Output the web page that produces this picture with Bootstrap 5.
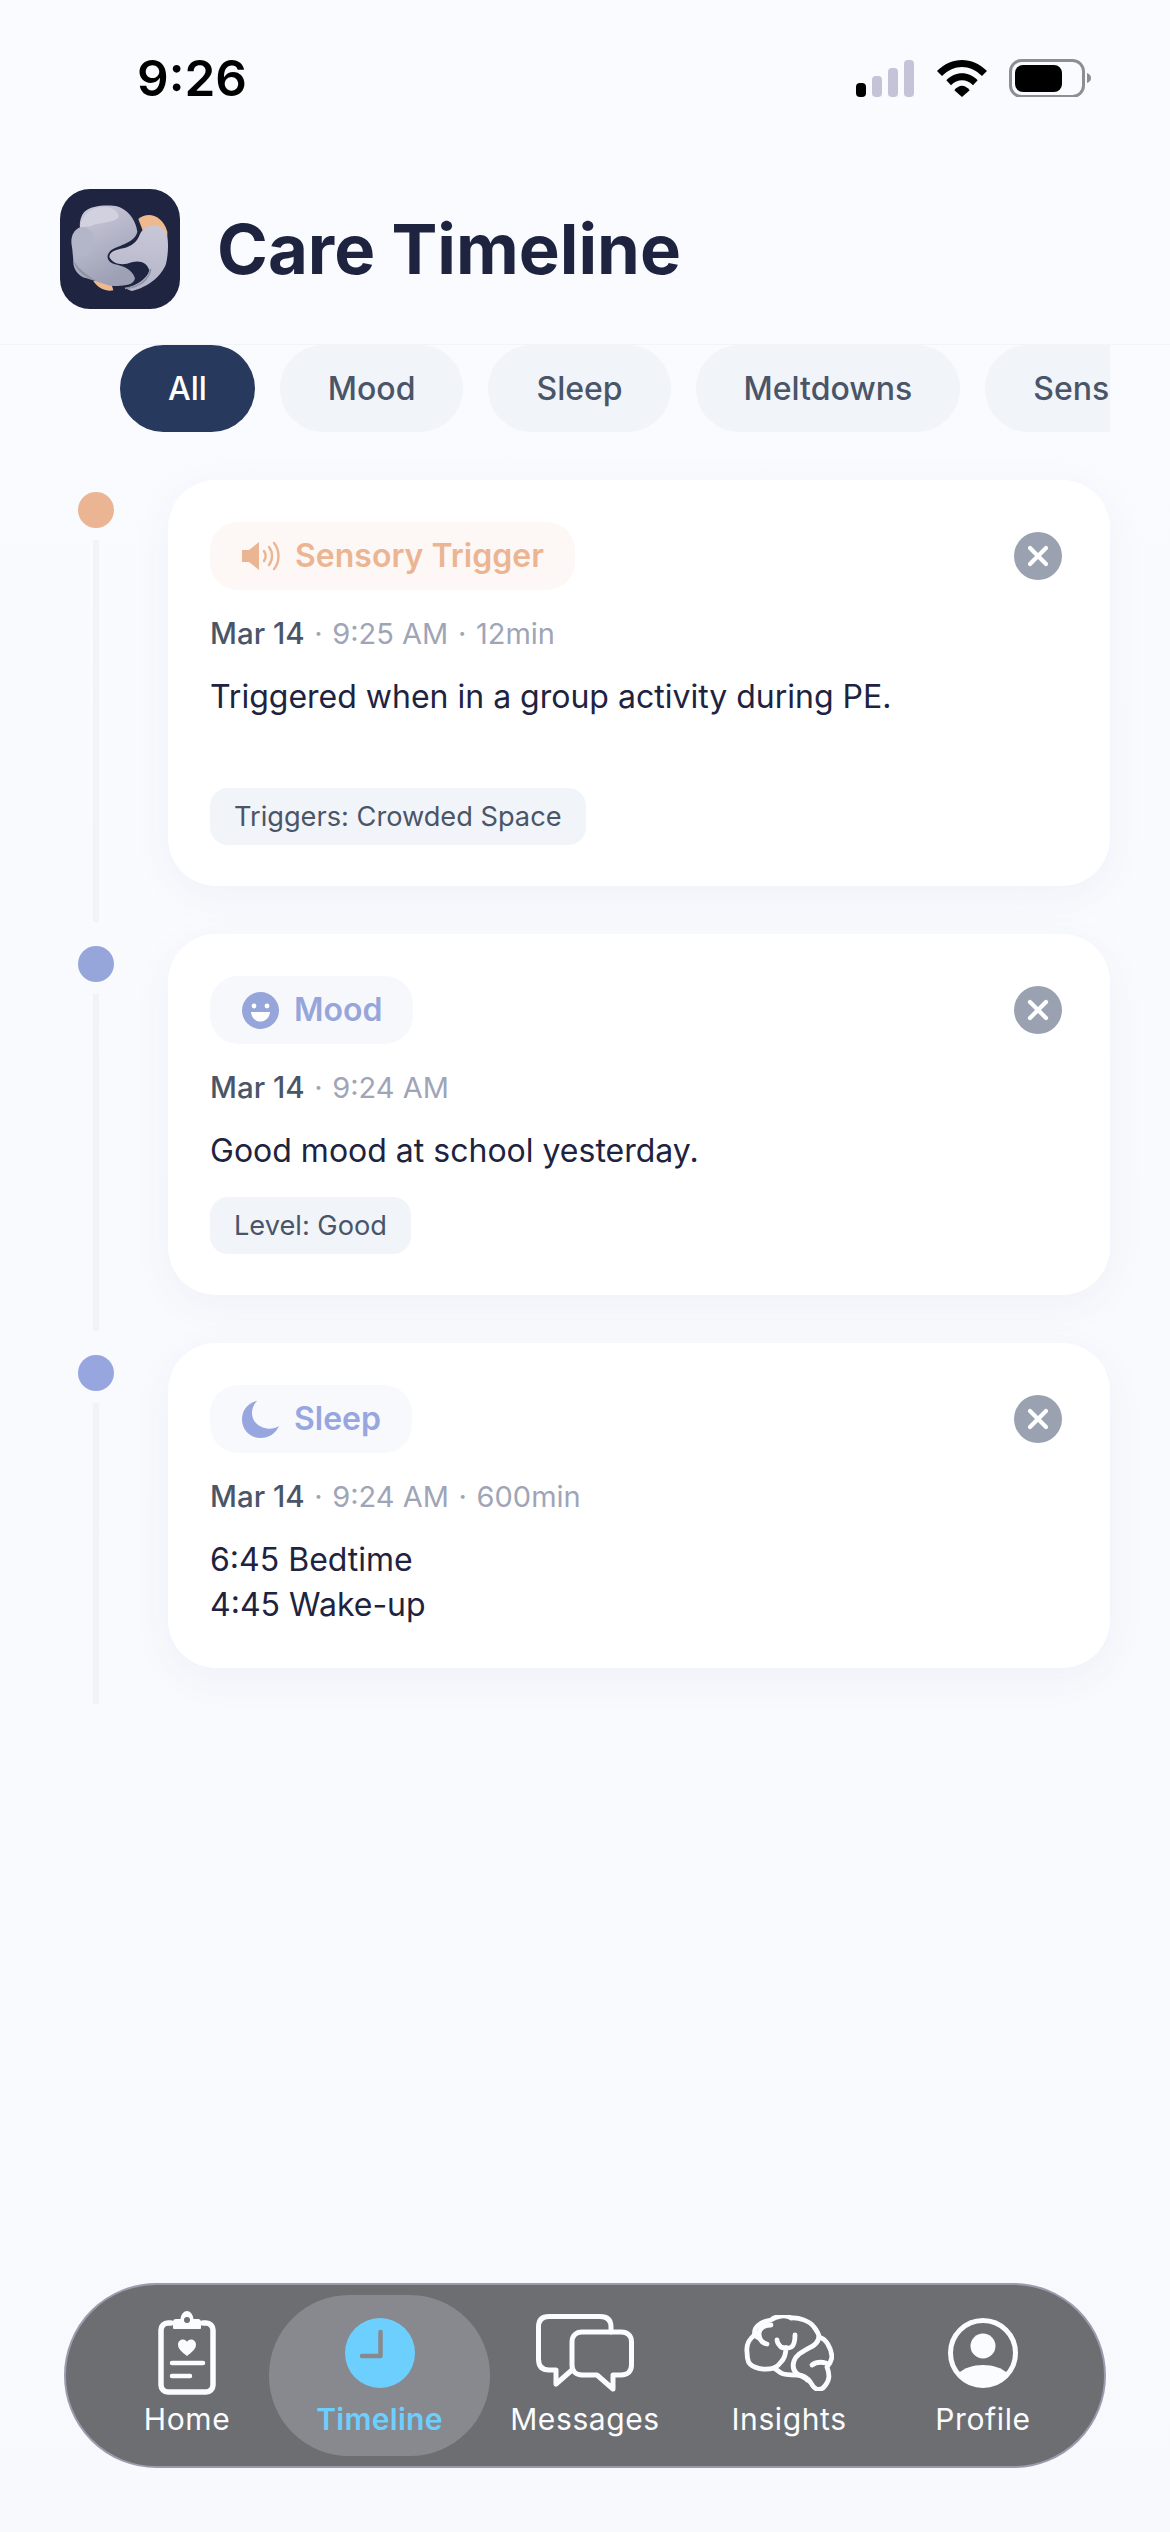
<!DOCTYPE html>
<html lang="en">
<head>
<meta charset="utf-8">
<title>Care Timeline</title>
<link href="https://cdn.jsdelivr.net/npm/bootstrap@5.3.0/dist/css/bootstrap.min.css" rel="stylesheet">
<style>
html,body{height:100%;}
body{width:1170px;height:2532px;margin:0;background:#f9faff;font-family:Inter,"Liberation Sans",sans-serif;overflow:hidden;color:#1e2340;}
.screen{width:1170px;height:2532px;display:flex;flex-direction:column;position:relative;background:linear-gradient(#fafbff,#f8f9fd);}
.statusrow{height:155px;padding:58px 79px 0 137px;align-items:flex-start;}
.clocktext{font-size:49.5px;font-weight:600;line-height:40px;color:#000;}
.sysicons{height:38px;margin-top:1px;}
.headrow{height:190px;padding:34px 60px 0;gap:37px;align-items:flex-start;border-bottom:1px solid #f2f4f8;}
.applogo{width:120px;height:120px;display:block;flex:none;}
.pagetitle{font-size:68.8px;font-weight:700;line-height:76px;margin:22px 0 0;color:#1e2440;}
.filterbar{margin:0 60px 0 120px;gap:25px;overflow:hidden;height:87px;flex:none;}
.fchip{flex:none;height:87px;border-radius:44px;background:#f1f4f8;color:#4a5568;font-size:32px;font-weight:500;line-height:88px;padding:0 48px;}
.fchip.on{background:#27395c;color:#fff;}
.feed{padding:48px 60px 0 78px;}
.evt{gap:54px;margin-bottom:48px;}
.railbox{width:36px;flex:none;padding-top:12px;}
.raildot{width:36px;height:36px;border-radius:50%;}
.railline{width:6px;margin:12px auto -36px;background:#f1f3f8;flex:1;}
.evtcard{flex:1;background:#fff;border-radius:48px;box-shadow:0 10px 40px rgba(60,70,120,.05);padding:42px 48px 41px 42px;}
.typechip{height:68px;border-radius:28px;padding:0 31px 0 32px;gap:15px;font-size:32px;font-weight:600;line-height:70px;display:flex;align-items:center;}
.typechip svg{flex:none;}
.closer{width:48px;height:48px;border-radius:50%;background:#9aa2b1;border:0;padding:0;margin:10px 0 0;display:flex;align-items:center;justify-content:center;flex:none;}
.metarow{font-size:29px;line-height:42px;height:42px;margin-top:23px;color:#9fa5b6;white-space:nowrap;}
.metarow b{font-weight:500;color:#4a5568;font-size:29.5px;line-height:1;}
.metasep{margin:0 1.5px;}
.bodytext{font-size:32px;line-height:45px;margin:19px 0 0;color:#1e2340;white-space:pre-line;}
.tagpill{display:block;width:fit-content;height:57px;line-height:57px;border-radius:18px;background:#f1f4f9;color:#4a5568;font-size:27.2px;padding:0 24px;margin-top:24px;}
.dock{position:absolute;left:64px;top:2283px;width:1042px;height:185px;border-radius:93px;background:#6d6e72;border:2px solid #9a9cae;padding:10px 0 0 39px;align-items:flex-start;}
.dockitem{height:161px;flex:none;display:flex;flex-direction:column;align-items:center;color:#fbfcff;font-size:30px;font-weight:400;}
.dockart{height:85px;margin-top:15px;display:flex;align-items:center;justify-content:center;}
.docklabel{line-height:36px;letter-spacing:.6px;margin-top:6px;}
.dockitem.on{background:#88898e;border-radius:80px;color:#6dcffe;font-weight:600;}
.dockitem.on .docklabel{letter-spacing:.3px;}
</style>
</head>
<body>
<div class="screen">
  <div class="d-flex justify-content-between statusrow">
    <div class="clocktext">9:26</div>
    <svg class="sysicons" width="235" height="38" viewBox="856 58 235 38" aria-hidden="true">
      <rect x="856" y="82" width="10" height="14" rx="4" fill="#000"/>
      <rect x="872" y="75" width="10" height="21" rx="4" fill="#c5c3d8"/>
      <rect x="888" y="67" width="10" height="29" rx="4" fill="#c5c3d8"/>
      <rect x="904" y="59" width="10" height="37" rx="4" fill="#c5c3d8"/>
      <g transform="translate(937 59) scale(.3333)">
        <path d="M0 33C44-11 106-11 150 33L135 48C98 12 52 12 15 48Z" fill="#000"/>
        <path d="M28 61C55 33 95 33 122 61L108 76C89 56 61 56 42 76Z" fill="#000"/>
        <path d="M52 91C66 73 84 73 98 91L75 111Z" fill="#000"/>
      </g>
      <rect x="1010.5" y="59.5" width="73" height="36" rx="11" fill="none" stroke="#8d8d94" stroke-width="3"/>
      <rect x="1015" y="64" width="47" height="27" rx="8" fill="#000"/>
      <path d="M1087 72c3 1 4 3 4 5s-1 4-4 5z" fill="#8d8d94"/>
    </svg>
  </div>

  <div class="d-flex headrow">
    <svg class="applogo" viewBox="0 0 360 360" aria-hidden="true">
      <defs>
        <linearGradient id="blobA" x1="0" y1="0" x2=".4" y2="1"><stop offset="0" stop-color="#cdccdc"/><stop offset="1" stop-color="#9ea1b6"/></linearGradient>
        <linearGradient id="blobB" x1="0" y1="0" x2="0" y2="1"><stop offset="0" stop-color="#c8c7d8"/><stop offset="1" stop-color="#b4b5c9"/></linearGradient>
      </defs>
      <rect width="360" height="360" rx="90" fill="#1f2540"/>
      <path d="M235 90C262 68 305 75 322 128V170L250 130Z" fill="#eeb98e"/>
      <path d="M100 276C115 300 140 308 160 304L150 270Z" fill="#eeb98e"/>
      <path d="M40 215C38 235 52 262 80 268L150 290C180 292 222 292 225 268 216 240 190 232 165 226 140 218 135 198 155 182 180 168 225 160 232 128 228 88 195 52 160 50 130 48 90 50 72 70 60 85 58 105 60 118 45 130 36 150 36 170Z" fill="url(#blobA)"/>
      <path d="M60 118C62 80 90 56 130 54 158 52 174 66 176 84 160 104 110 100 92 112 80 112 68 114 60 118Z" fill="#d2d1df"/>
      <path d="M40 215C50 250 80 268 110 275 90 265 60 245 40 215Z" fill="#8f919f"/>
      <ellipse cx="68" cy="158" rx="34" ry="44" fill="#b3b5c9"/>
      <path d="M240 135C252 108 290 100 312 122 328 140 326 190 318 225 305 260 265 295 215 306L195 298C235 288 262 268 268 244 262 222 240 212 215 220 190 230 160 228 148 204 148 190 165 182 190 178 215 172 232 158 240 135Z" fill="url(#blobB)"/>
      <path d="M195 298C240 295 268 270 272 240" fill="none" stroke="#8d91a6" stroke-width="5"/>
    </svg>
    <h1 class="pagetitle">Care Timeline</h1>
  </div>

  <div class="d-flex filterbar">
    <div class="fchip on">All</div>
    <div class="fchip">Mood</div>
    <div class="fchip">Sleep</div>
    <div class="fchip">Meltdowns</div>
    <div class="fchip">Sensory</div>
  </div>

  <div class="feed">
    <div class="d-flex evt">
      <div class="railbox d-flex flex-column">
        <div class="raildot" style="background:#ebb593"></div>
        <div class="railline"></div>
      </div>
      <div class="evtcard">
        <div class="d-flex justify-content-between align-items-start">
          <div class="typechip" style="background:#fdf8f5;color:#ebb593">
            <svg width="38" height="30" viewBox="0 0 38 30" aria-hidden="true"><path d="M0 9h7L17 1v28L7 21H0z" fill="#ebb593"/><path d="M22 10c2 3 2 7 0 10M27 6c4 5 4 13 0 18M32 2c6 7 6 19 0 26" fill="none" stroke="#ebb593" stroke-width="2.4" stroke-linecap="round"/></svg>
            <span>Sensory Trigger</span>
          </div>
          <button class="closer" aria-label="Delete"><svg width="22" height="22" viewBox="0 0 22 22"><path d="M3 3l16 16M19 3L3 19" stroke="#fff" stroke-width="4.2" stroke-linecap="round"/></svg></button>
        </div>
        <div class="metarow"><b>Mar 14</b><span class="metasep"> · </span>9:25 AM<span class="metasep"> · </span>12min</div>
        <p class="bodytext">Triggered when in a group activity during PE.
&nbsp;</p>
        <div class="tagpill">Triggers: Crowded Space</div>
      </div>
    </div>

    <div class="d-flex evt">
      <div class="railbox d-flex flex-column">
        <div class="raildot" style="background:#97a6da"></div>
        <div class="railline"></div>
      </div>
      <div class="evtcard">
        <div class="d-flex justify-content-between align-items-start">
          <div class="typechip" style="background:#f7f8fc;color:#97a6da">
            <svg width="37" height="37" viewBox="0 0 37 37" aria-hidden="true"><circle cx="18.5" cy="18.5" r="18.5" fill="#97a6da"/><circle cx="12" cy="14" r="2.4" fill="#fff"/><circle cx="25" cy="14" r="2.4" fill="#fff"/><path d="M9 20h19c-.5 6-4.500 9.500-9.500 9.500S9.500 26 9 20z" fill="#fff"/></svg>
            <span>Mood</span>
          </div>
          <button class="closer" aria-label="Delete"><svg width="22" height="22" viewBox="0 0 22 22"><path d="M3 3l16 16M19 3L3 19" stroke="#fff" stroke-width="4.2" stroke-linecap="round"/></svg></button>
        </div>
        <div class="metarow"><b>Mar 14</b><span class="metasep"> · </span>9:24 AM</div>
        <p class="bodytext">Good mood at school yesterday.</p>
        <div class="tagpill">Level: Good</div>
      </div>
    </div>

    <div class="d-flex evt">
      <div class="railbox d-flex flex-column">
        <div class="raildot" style="background:#97a6de"></div>
        <div class="railline"></div>
      </div>
      <div class="evtcard">
        <div class="d-flex justify-content-between align-items-start">
          <div class="typechip" style="background:#f8f9fd;color:#97a6de">
            <svg width="37" height="37" viewBox="0 0 37 37" aria-hidden="true"><path d="M15 0C5 2 0 10 0 18.500 0 29 8 37 18.500 37c8 0 15-4 18.500-12C33 27.500 29 28 25 27.500 15 26 9.500 19 10 11 10.300 7 12 3 15 0z" fill="#97a6de"/></svg>
            <span>Sleep</span>
          </div>
          <button class="closer" aria-label="Delete"><svg width="22" height="22" viewBox="0 0 22 22"><path d="M3 3l16 16M19 3L3 19" stroke="#fff" stroke-width="4.2" stroke-linecap="round"/></svg></button>
        </div>
        <div class="metarow"><b>Mar 14</b><span class="metasep"> · </span>9:24 AM<span class="metasep"> · </span>600min</div>
        <p class="bodytext">6:45 Bedtime
4:45 Wake-up</p>
      </div>
    </div>
  </div>

  <nav class="dock d-flex">
    <div class="dockitem" style="width:164px">
      <div class="dockart">
        <svg width="58" height="84" viewBox="0 0 58 84" fill="none" aria-hidden="true">
          <path d="M13 12H10a7 7 0 0 0-7 7v55a7 7 0 0 0 7 7h38a7 7 0 0 0 7-7V19a7 7 0 0 0-7-7h-3" stroke="#fbfcff" stroke-width="5.500" stroke-linecap="round"/>
          <path d="M15 17V11a3 3 0 0 1 3-3h4.500C23 3 26 0 29 0s6 3 6.500 8H40a3 3 0 0 1 3 3v6a1 1 0 0 1-1 1H16a1 1 0 0 1-1-1z" fill="#fbfcff"/>
          <circle cx="29" cy="9" r="3" fill="#6d6e72"/>
          <path d="M29 45c-5-4-9-7-9-11.500 0-3 2.500-5 5-5 2 0 3.200 1 4 2.300.8-1.300 2-2.300 4-2.300 2.500 0 5 2 5 5C38 38 34 41 29 45z" fill="#fbfcff"/>
          <path d="M14 52h31M14 65h18" stroke="#fbfcff" stroke-width="4.500" stroke-linecap="round"/>
        </svg>
      </div>
      <div class="docklabel">Home</div>
    </div>
    <div class="dockitem on" style="width:221px">
      <div class="dockart">
        <svg width="70" height="70" viewBox="0 0 70 70" aria-hidden="true">
          <circle cx="35" cy="35" r="35" fill="#6dcffe"/>
          <path d="M35.500 14v24H17" fill="none" stroke="#88898e" stroke-width="4.500" stroke-linecap="round" stroke-linejoin="round"/>
        </svg>
      </div>
      <div class="docklabel">Timeline</div>
    </div>
    <div class="dockitem" style="width:190px">
      <div class="dockart">
        <svg width="98" height="78" viewBox="0 0 98 78" fill="none" stroke="#fbfcff" stroke-width="5" stroke-linejoin="round" stroke-linecap="round" aria-hidden="true">
          <path d="M36 56 20 70V56H13C6 56 2.500 52 2.500 45V13C2.500 6 6 2.500 13 2.500H64C71 2.500 75 6 75 13V18"/>
          <path d="M46 18H85C92 18 95.500 22 95.500 28V51C95.500 57 92 61 85 61H77V75L61 61H46C40 61 36 57 36 51V28C36 22 40 18 46 18Z"/>
        </svg>
      </div>
      <div class="docklabel">Messages</div>
    </div>
    <div class="dockitem" style="width:218px">
      <div class="dockart">
        <svg width="90" height="76" viewBox="0 0 90 76" fill="none" stroke="#fbfcff" stroke-width="4.800" stroke-linecap="round" stroke-linejoin="round" aria-hidden="true">
          <path d="M3 37C2 29 6 23 11 20 9 13 15 7 27 5 32 1 42-1 47 3 54 2 66 6 70 12 73 16 75 19 75 22 82 24 87 32 88 42 87 47 85 50 83 52 86 60 86 66 79 73 74 76 70 74 67 68 65 65 60 60 53 60 46 60 40 60 37 58L30 53C20 56 8 53 4.500 47 3.500 44 3 40 3 37Z"/>
          <path d="M27 10C20 10 16 13 15 18 15 24 18 28 23 29M10 20C12 21 13 22 15 23"/>
          <path d="M51 20C51 26 50 30 47.500 32 44 34 39 33 37 32 35 30 33 28 33 25M42 32.500C42 38 40 44 37 47 35 50 32 52 30 53"/>
          <path d="M75 22C74 28 70 31 65 33 58 37 52 40 50 46 48 52 50 57 55 60 59 62 62 63 63 65M68 50C72 47 78 47 82 48"/>
        </svg>
      </div>
      <div class="docklabel">Insights</div>
    </div>
    <div class="dockitem" style="width:170px">
      <div class="dockart">
        <svg width="70" height="70" viewBox="0 0 70 70" aria-hidden="true">
          <circle cx="35" cy="35" r="32.500" fill="none" stroke="#fbfcff" stroke-width="5"/>
          <circle cx="35" cy="28" r="12.500" fill="#fbfcff"/>
          <path d="M11 55C16 50 25 47 35 47s19 3 24 8C53 63 45 68 35 68S17 63 11 55z" fill="#fbfcff"/>
        </svg>
      </div>
      <div class="docklabel">Profile</div>
    </div>
  </nav>
</div>
<script src="https://cdn.jsdelivr.net/npm/bootstrap@5.3.0/dist/js/bootstrap.bundle.min.js"></script>
</body>
</html>
